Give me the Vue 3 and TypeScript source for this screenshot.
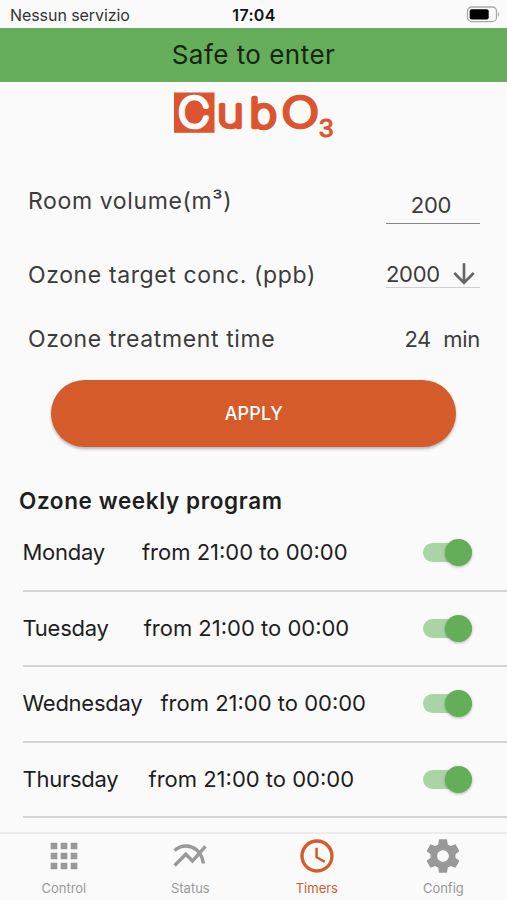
<script setup lang="ts">
import { ref } from 'vue'

interface Program {
  day: string
  from: string
  to: string
  enabled: boolean
  key: string
}

interface Tab {
  label: string
  icon: string
}

const volume = ref('200')
const concentration = ref('2000')
const treatmentMinutes = ref(24)

const programs = ref<Program[]>([
  { day: 'Monday', from: '21:00', to: '00:00', enabled: true, key: 'mon' },
  { day: 'Tuesday', from: '21:00', to: '00:00', enabled: true, key: 'tue' },
  { day: 'Wednesday', from: '21:00', to: '00:00', enabled: true, key: 'wed' },
  { day: 'Thursday', from: '21:00', to: '00:00', enabled: true, key: 'thu' },
])

const activeTab = ref('Timers')
const tabs: Tab[] = [
  {
    label: 'Control',
    icon: 'M4 8h4V4H4v4zm6 12h4v-4h-4v4zm-6 0h4v-4H4v4zm0-6h4v-4H4v4zm6 0h4v-4h-4v4zm6-10v4h4V4h-4zm-6 4h4V4h-4v4zm6 6h4v-4h-4v4zm0 6h4v-4h-4v4z',
  },
  {
    label: 'Status',
    icon: 'M22 6.92l-1.41-1.41-2.85 3.21C15.68 6.4 12.83 5 9.61 5 6.72 5 4.07 6.16 2 8l1.42 1.42C5.12 7.93 7.27 7 9.61 7c2.74 0 5.09 1.26 6.77 3.24l-2.88 3.24-4-4L2 16.99l1.5 1.5 6-6.01 4 4 4.05-4.55c.75 1.35 1.25 2.9 1.44 4.55H21c-.22-2.3-.95-4.39-2.04-6.14L22 6.92z',
  },
  {
    label: 'Timers',
    icon: 'M11.99 2C6.47 2 2 6.48 2 12s4.47 10 9.99 10C17.52 22 22 17.52 22 12S17.52 2 11.99 2zM12 20c-4.42 0-8-3.58-8-8s3.58-8 8-8 8 3.58 8 8-3.58 8-8 8zm.5-13H11v6l5.25 3.15.75-1.23-4.5-2.67z',
  },
  {
    label: 'Config',
    icon: 'M19.43 12.98c.04-.32.07-.64.07-.98s-.03-.66-.07-.98l2.11-1.65c.19-.15.24-.42.12-.64l-2-3.46c-.12-.22-.39-.3-.61-.22l-2.49 1c-.52-.4-1.08-.73-1.69-.98l-.38-2.65C14.46 2.18 14.25 2 14 2h-4c-.25 0-.46.18-.49.42l-.38 2.65c-.61.25-1.17.59-1.69.98l-2.49-1c-.23-.09-.49 0-.61.22l-2 3.46c-.13.22-.07.49.12.64l2.11 1.65c-.04.32-.07.65-.07.98s.03.66.07.98l-2.11 1.65c-.19.15-.24.42-.12.64l2 3.46c.12.22.39.3.61.22l2.49-1c.52.4 1.08.73 1.69.98l.38 2.65c.03.24.24.42.49.42h4c.25 0 .46-.18.49-.42l.38-2.65c.61-.25 1.17-.59 1.69-.98l2.49 1c.23.09.49 0 .61-.22l2-3.46c.12-.22.07-.49-.12-.64l-2.11-1.65zM12 15.5c-1.93 0-3.5-1.57-3.5-3.5s1.57-3.5 3.5-3.5 3.5 1.57 3.5 3.5-1.57 3.5-3.5 3.5z',
  },
]
</script>

<template>
  <div class="screen">
    <header class="status-bar">
      <span class="carrier">Nessun servizio</span>
      <span class="clock">17:04</span>
      <svg class="battery" width="34" height="18" viewBox="0 0 34 18">
        <rect x="1.5" y="1" width="29" height="14.6" rx="4.2" fill="none" stroke="#a9a9a9" stroke-width="1.3" />
        <rect x="3.7" y="3.2" width="19" height="10.2" rx="2" fill="#000" />
        <path d="M32 6c1.6.8 1.6 4 0 4.8z" fill="#a9a9a9" />
      </svg>
    </header>

    <div class="banner"><span>Safe to enter</span></div>

    <div class="logo">
      <svg width="170" height="62" viewBox="0 0 170 62">
        <rect x="6" y="6.5" width="40.5" height="40.3" fill="#dc5430" />
        <g class="logo-text">
          <text class="logo-c" transform="translate(10.3 41.2) scale(1.08 1)">C</text>
          <text transform="translate(49.2 41.2) scale(1.13 1)">u</text>
          <text transform="translate(81.4 41.2) scale(1.17 1)">b</text>
          <text transform="translate(113.9 41.2) scale(1.22 1)">O</text>
          <text class="logo-sub" x="151" y="51.2">3</text>
        </g>
      </svg>
    </div>

    <main class="content">
      <section class="form">
        <div class="field field-volume">
          <span class="label">Room volume(m³)</span>
          <span class="value input">{{ volume }}</span>
        </div>
        <div class="field field-target">
          <span class="label">Ozone target conc. (ppb)</span>
          <span class="value select">
            {{ concentration }}
            <svg width="32" height="32" viewBox="0 0 24 24">
              <path fill="#666" d="M20 12l-1.41-1.41L13 16.17V4h-2v12.17l-5.58-5.59L4 12l8 8 8-8z" />
            </svg>
          </span>
        </div>
        <div class="field field-time">
          <span class="label">Ozone treatment time</span>
          <span class="value time"><span>{{ treatmentMinutes }}</span><span>min</span></span>
        </div>
      </section>

      <button class="apply" type="button">APPLY</button>

      <h2 class="title">Ozone weekly program</h2>
      <ul class="programs">
        <li v-for="p in programs" :key="p.key" class="program">
          <span class="day" :class="p.key">{{ p.day }}</span>
          <span class="range">from {{ p.from }} to {{ p.to }}</span>
          <button
            class="switch"
            :class="{ on: p.enabled }"
            type="button"
            role="switch"
            :aria-checked="p.enabled"
            @click="p.enabled = !p.enabled"
          >
            <span class="knob"></span>
          </button>
        </li>
      </ul>
    </main>

    <nav class="tabs">
      <button
        v-for="tab in tabs"
        :key="tab.label"
        class="tab"
        :class="{ active: tab.label === activeTab }"
        type="button"
        @click="activeTab = tab.label"
      >
        <svg width="40" height="40" viewBox="0 0 24 24"><path fill="currentColor" :d="tab.icon" /></svg>
        <span>{{ tab.label }}</span>
      </button>
    </nav>
  </div>
</template>

<style>
body {
  margin: 0;
  background: #fafafa;
}
</style>

<style scoped>
.screen {
  display: flex;
  flex-direction: column;
  width: 507px;
  height: 900px;
  overflow: hidden;
  background: #fafafa;
  color: #1e1e1e;
  font-family: Inter, 'Liberation Sans', sans-serif;
}

button {
  padding: 0;
  border: 0;
  background: none;
  font-family: inherit;
}

.status-bar {
  display: grid;
  grid-template-columns: 1fr auto 1fr;
  align-items: center;
  height: 28px;
  padding: 2px 7px 0 10px;
  box-sizing: border-box;
  font-size: 16px;
  line-height: 20px;
}

.carrier {
  color: #333;
  letter-spacing: -0.07px;
}

.clock {
  margin-left: -2px;
  color: #111;
  font-weight: 600;
  letter-spacing: 0.3px;
}

.battery {
  justify-self: end;
}

.banner {
  display: flex;
  align-items: center;
  justify-content: center;
  height: 53.5px;
  box-sizing: border-box;
  background: #66ae5b;
  color: #14260f;
  font-size: 26px;
  letter-spacing: 0.47px;
}

.logo {
  height: 78.5px;
  padding: 4.5px 0 0 168px;
  box-sizing: border-box;
}

.logo-text {
  fill: #dc5430;
  stroke: #dc5430;
  stroke-width: 4.6px;
  stroke-linejoin: round;
  font-size: 40px;
  font-weight: 100;
}

.logo-c {
  fill: #fff;
  stroke: #fff;
}

.logo-sub {
  font-family: 'Liberation Sans', sans-serif;
  font-size: 26px;
  font-weight: 400;
  stroke-width: 1px;
}

.content {
  flex: 1;
  min-height: 0;
  overflow: hidden;
}

.field {
  display: flex;
  justify-content: space-between;
  padding: 0 27px 0 28px;
  color: #3c3c3c;
  font-size: 23px;
  line-height: 30px;
}

.label {
  letter-spacing: 0.62px;
}

.value {
  font-size: 22px;
  letter-spacing: -0.3px;
}

.field-volume {
  height: 65px;
  padding-top: 26px;
}

.input {
  width: 94px;
  height: 38px;
  padding: 4px 4px 0 0;
  box-sizing: border-box;
  border-bottom: 1px solid #858585;
  text-align: center;
}

.field-target {
  height: 64px;
  padding-top: 9px;
}

.select {
  display: flex;
  align-items: center;
  justify-content: space-between;
  width: 94px;
  height: 28px;
  box-sizing: border-box;
  border-bottom: 1px solid #d0d0d0;
}

.field-time {
  height: 56px;
}

.time {
  display: flex;
  gap: 13px;
}

.time span:first-child {
  letter-spacing: -0.8px;
}

.apply {
  display: block;
  width: 405px;
  height: 67px;
  margin: 0 0 0 51.3px;
  border-radius: 34px;
  background: #d55b2b;
  box-shadow: 0 2px 3px rgba(0, 0, 0, 0.28);
  color: #fff;
  font-size: 18px;
  font-weight: 550;
  letter-spacing: 0.1px;
}

.title {
  margin: 38.8px 0 0 19px;
  font-size: 22.5px;
  font-weight: 600;
  line-height: 30px;
  letter-spacing: 0.62px;
}

.programs {
  margin: 0.2px 0 0 22.5px;
  padding: 0;
  list-style: none;
}

.program {
  display: flex;
  align-items: center;
  height: 75.6px;
  padding-right: 35px;
  box-sizing: border-box;
  border-bottom: 2px solid #d5d5d5;
  font-size: 22px;
}

.day,
.range {
  padding-bottom: 1px;
}

.day {
  margin-right: 37px;
  letter-spacing: -0.25px;
}

.day.tue {
  margin-right: 35px;
}

.day.wed {
  margin-right: 18px;
}

.day.thu {
  margin-right: 30px;
}

.switch {
  display: flex;
  align-items: center;
  width: 49px;
  height: 19px;
  margin-left: auto;
  border-radius: 10px;
  background: #c4c4c4;
}

.switch.on {
  justify-content: flex-end;
  background: #a9d5a4;
}

.knob {
  width: 27px;
  height: 27px;
  flex: none;
  border-radius: 50%;
  background: #fff;
  box-shadow: 0 1px 3px rgba(0, 0, 0, 0.3);
}

.switch.on .knob {
  background: #64ae5a;
}

.tabs {
  display: grid;
  grid-template-columns: repeat(4, 126.5px);
  height: 68px;
  padding-left: 0.6px;
  box-sizing: border-box;
  border-top: 2px solid #ececec;
}

.tab {
  display: flex;
  flex-direction: column;
  align-items: center;
  padding-top: 2px;
  color: #999;
  font-size: 13px;
  line-height: 20px;
}

.tab span {
  margin-top: 2px;
}

.tab.active {
  color: #d55b2b;
}
</style>
